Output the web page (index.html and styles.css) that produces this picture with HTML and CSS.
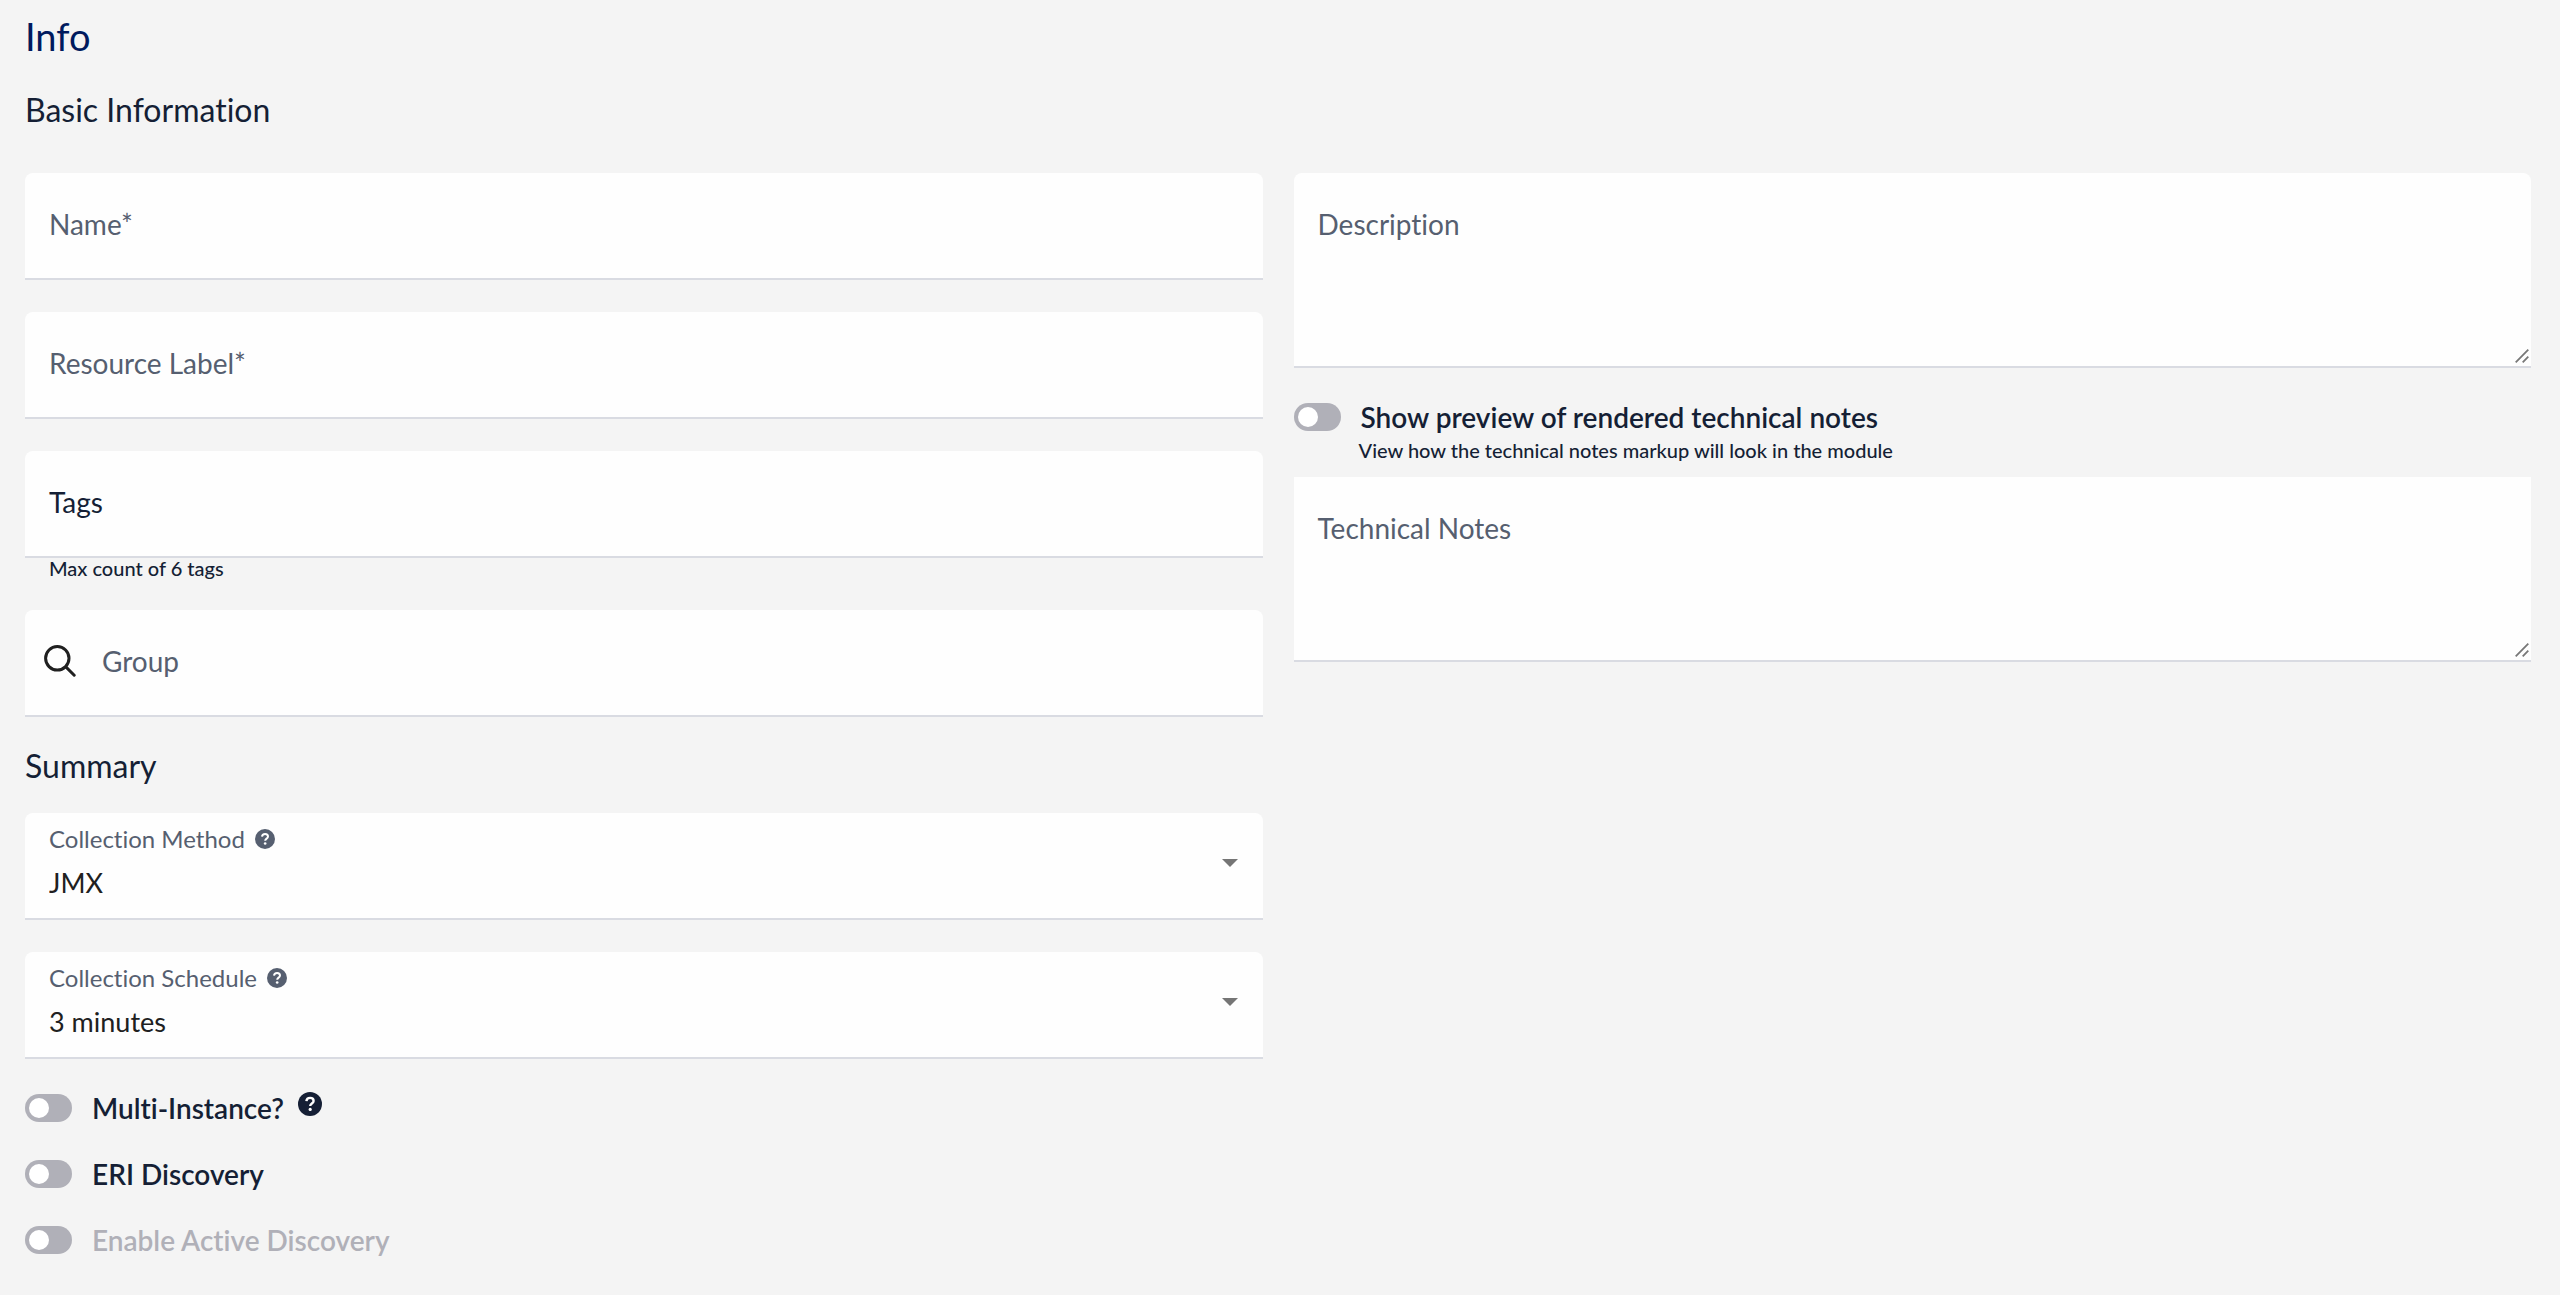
FILE: index.html
```html
<!DOCTYPE html>
<html lang="en">
<head>
<meta charset="utf-8">
<meta name="viewport" content="width=device-width, initial-scale=1">
<title>Info</title>
<link rel="stylesheet" href="styles.css">
</head>
<body>
<svg class="sprite" aria-hidden="true">
  <symbol id="help" viewBox="0 0 24 24">
    <circle cx="12" cy="12" r="12" fill="currentColor"/>
    <path d="M8.400 9.200C8.600 7 10 5.900 12.100 5.900c2.100 0 3.500 1.200 3.500 3 0 2.600-3.400 2.700-3.400 5.200" fill="none" stroke="#fff" stroke-width="2.400"/>
    <circle cx="12.200" cy="17.400" r="1.600" fill="#fff"/>
  </symbol>
  <symbol id="caret" viewBox="0 0 16 8"><path d="M0 0h16L8 8z" fill="currentColor"/></symbol>
  <symbol id="grip" viewBox="0 0 14 14"><path d="M.7 13.300L13.300.7M7.700 13.300l5.600-5.600" fill="none" stroke="currentColor" stroke-width="1.800"/></symbol>
</svg>
<form class="page">
  <h1 class="title">Info</h1>
  <h2 class="section-title">Basic Information</h2>
  <div class="columns">
    <div class="column">
      <div class="stack">
        <div class="field">
          <label class="field-label" for="name">Name*</label>
          <input class="control" id="name" type="text">
        </div>
        <div class="field">
          <label class="field-label" for="resource">Resource Label*</label>
          <input class="control" id="resource" type="text">
        </div>
        <div class="field">
          <label class="field-label strong" for="tags">Tags</label>
          <input class="control" id="tags" type="text" aria-describedby="tags-hint">
        </div>
      </div>
      <p class="hint" id="tags-hint">Max count of 6 tags</p>
      <div class="field">
        <label class="field-label search-label" for="group">
          <svg class="search-icon" viewBox="0 0 32 32" aria-hidden="true"><path d="M21.600 21.600l8.600 8.600M25 13.300a11.700 11.700 0 1 1-23.400 0 11.700 11.700 0 0 1 23.400 0z" fill="none" stroke="currentColor" stroke-width="3" stroke-linecap="round"/></svg>
          Group
        </label>
        <input class="control" id="group" type="text">
      </div>
      <h2 class="section-title summary">Summary</h2>
      <div class="stack">
        <div class="field">
          <div class="select-label">
            <label for="method">Collection Method</label>
            <button class="help" type="button" aria-label="About collection method"><svg class="help-icon"><use href="#help"/></svg></button>
          </div>
          <select class="control select" id="method"><option>JMX</option></select>
          <svg class="caret" aria-hidden="true"><use href="#caret"/></svg>
        </div>
        <div class="field">
          <div class="select-label">
            <label for="schedule">Collection Schedule</label>
            <button class="help" type="button" aria-label="About collection schedule"><svg class="help-icon"><use href="#help"/></svg></button>
          </div>
          <select class="control select" id="schedule"><option>3 minutes</option></select>
          <svg class="caret" aria-hidden="true"><use href="#caret"/></svg>
        </div>
      </div>
      <div class="toggles">
        <div class="toggle-row">
          <input class="toggle" id="multi" type="checkbox" role="switch">
          <label for="multi">Multi-Instance?</label>
          <button class="help large" type="button" aria-label="About multi-instance"><svg class="help-icon"><use href="#help"/></svg></button>
        </div>
        <div class="toggle-row">
          <input class="toggle" id="eri" type="checkbox" role="switch">
          <label for="eri">ERI Discovery</label>
        </div>
        <div class="toggle-row disabled">
          <input class="toggle" id="active" type="checkbox" role="switch" disabled>
          <label for="active">Enable Active Discovery</label>
        </div>
      </div>
    </div>
    <div class="column">
      <div class="field tall">
        <label class="field-label" for="description">Description</label>
        <textarea class="control" id="description"></textarea>
        <svg class="grip" aria-hidden="true"><use href="#grip"/></svg>
      </div>
      <div class="preview">
        <div class="toggle-row">
          <input class="toggle" id="preview" type="checkbox" role="switch" aria-describedby="preview-hint">
          <label for="preview">Show preview of rendered technical notes</label>
        </div>
        <p class="preview-hint" id="preview-hint">View how the technical notes markup will look in the module</p>
      </div>
      <div class="field notes">
        <label class="field-label" for="notes">Technical Notes</label>
        <textarea class="control" id="notes"></textarea>
        <svg class="grip" aria-hidden="true"><use href="#grip"/></svg>
      </div>
    </div>
  </div>
</form>
</body>
</html>
```
FILE: styles.css
```css
:root {
  --ink: #151f35;
  --muted: #565f70;
  --black: #202020;
  --grey: #b0b0b8;
  --line: #d9dbe2;
}

* { box-sizing: border-box; }

body {
  margin: 0;
  background: #f4f4f4;
  color: var(--ink);
  font: 28px/32px Lato, "Open Sans", sans-serif;
  font-variant-ligatures: none;
}

h1, h2, p { margin: 0; }

button, input, select, textarea {
  margin: 0;
  font: inherit;
  font-variant-ligatures: none;
  color: inherit;
}

.sprite { position: absolute; width: 0; height: 0; }

.page { padding: 16px 29px 40px 25px; }

.title {
  font-size: 38px;
  line-height: 40px;
  font-weight: 400;
  color: #001a5e;
}

.section-title {
  margin: 36px 0 45px;
  font-size: 32px;
  line-height: 36px;
  font-weight: 400;
}

.section-title.summary { margin: 31px 0 29px; }

.columns {
  display: grid;
  grid-template-columns: 1fr 1fr;
  gap: 31px;
}

.stack { display: grid; gap: 32px; }

/* Label and control share one grid cell, so the label rests inside the box. */
.field {
  display: grid;
  grid-template-columns: 1fr;
  grid-template-rows: minmax(105px, auto);
  overflow: hidden;
  background: #fefefe;
  border-bottom: 2px solid var(--line);
  border-radius: 8px 8px 0 0;
}

.field > * { grid-area: 1 / 1; }

.field.tall { grid-template-rows: minmax(193px, auto); }

.field.notes {
  grid-template-rows: minmax(183px, auto);
  border-radius: 0;
}

.field-label {
  align-self: start;
  padding: 35px 24px 0;
  color: var(--muted);
  pointer-events: none;
}

.field-label.strong { color: var(--ink); }

.search-label {
  display: flex;
  align-items: center;
  gap: 26px;
  padding-left: 19px;
}

.search-icon { width: 32px; height: 32px; color: var(--black); }

.control {
  width: 100%;
  padding: 35px 24px;
  border: 0;
  border-radius: 0;
  background: none;
  outline: none;
  resize: none;
}

.hint {
  padding: 0 24px 32px;
  font-size: 20px;
  line-height: 20px;
  font-weight: 500;
}

.select-label {
  z-index: 1;
  display: flex;
  align-items: center;
  gap: 10px;
  place-self: start;
  padding: 10px 24px 0;
  font-size: 24px;
  color: var(--muted);
}

.select {
  appearance: none;
  padding: 46px 24px 12px;
  font-size: 27px;
  color: var(--black);
}

.caret {
  place-self: center end;
  width: 16px;
  height: 8px;
  margin: 0 25px 6px 0;
  color: #757575;
  pointer-events: none;
}

.grip {
  place-self: end;
  width: 14px;
  height: 14px;
  margin: 0 2px 3px 0;
  color: #777;
  pointer-events: none;
}

.help {
  display: flex;
  padding: 0;
  border: 0;
  background: none;
  cursor: pointer;
}

.help-icon { width: 20px; height: 20px; }

.help.large .help-icon { width: 24px; height: 24px; }

.help.large { align-self: flex-start; margin-left: -6px; }

.toggles {
  display: grid;
  gap: 34px;
  padding-top: 33px;
}

.toggle-row {
  display: flex;
  align-items: center;
  gap: 20px;
  font-weight: 600;
}

.toggle-row.disabled { color: var(--grey); }

.toggle {
  appearance: none;
  display: flex;
  align-items: center;
  flex: none;
  width: 47px;
  height: 28px;
  padding: 0 4px;
  border-radius: 14px;
  background: var(--grey);
}

.toggle::before {
  content: "";
  width: 20px;
  height: 20px;
  border-radius: 50%;
  background: #fff;
}

.toggle:checked { justify-content: flex-end; background: #001a5e; }

.preview { padding: 33px 0 15px; }

.preview-hint {
  padding: 5px 0 0 65px;
  font-size: 20px;
  line-height: 24px;
  font-weight: 500;
}
```
